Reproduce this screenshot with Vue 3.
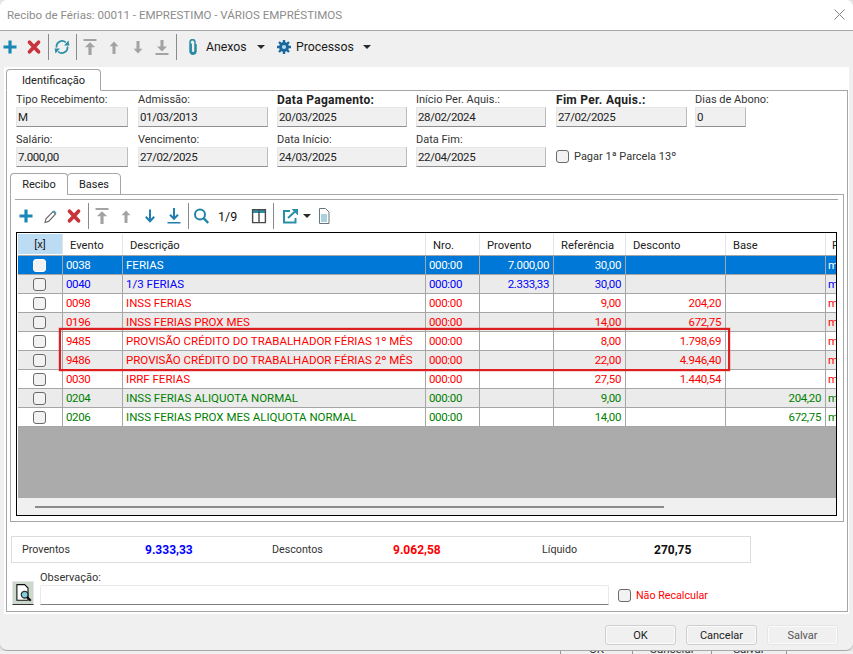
<script setup>
const fieldsA = [
  { label: 'Tipo Recebimento:', value: 'M', w: 112 },
  { label: 'Admissão:', value: '01/03/2013', w: 130 },
  { label: 'Data Pagamento:', value: '20/03/2025', w: 130, bold: true },
  { label: 'Início Per. Aquis.:', value: '28/02/2024', w: 130 },
  { label: 'Fim Per. Aquis.:', value: '27/02/2025', w: 131, bold: true },
  { label: 'Dias de Abono:', value: '0', w: 51 },
]
const fieldsB = [
  { label: 'Salário:', value: '7.000,00', w: 112 },
  { label: 'Vencimento:', value: '27/02/2025', w: 130 },
  { label: 'Data Início:', value: '24/03/2025', w: 130 },
  { label: 'Data Fim:', value: '22/04/2025', w: 130 },
]
const headers = ['[x]', 'Evento', 'Descrição', 'Nro.', 'Provento', 'Referência', 'Desconto', 'Base', 'F']
const rows = [
  { c: 'sel', ev: '0038', d: 'FERIAS', p: '7.000,00', r: '30,00', de: '', b: '' },
  { c: 'blue', ev: '0040', d: '1/3 FERIAS', p: '2.333,33', r: '30,00', de: '', b: '' },
  { c: 'red', ev: '0098', d: 'INSS FERIAS', p: '', r: '9,00', de: '204,20', b: '' },
  { c: 'red', ev: '0196', d: 'INSS FERIAS PROX MES', p: '', r: '14,00', de: '672,75', b: '' },
  { c: 'red', ev: '9485', d: 'PROVISÃO CRÉDITO DO TRABALHADOR FÉRIAS 1º MÊS', p: '', r: '8,00', de: '1.798,69', b: '' },
  { c: 'red', ev: '9486', d: 'PROVISÃO CRÉDITO DO TRABALHADOR FÉRIAS 2º MÊS', p: '', r: '22,00', de: '4.946,40', b: '' },
  { c: 'red', ev: '0030', d: 'IRRF FERIAS', p: '', r: '27,50', de: '1.440,54', b: '' },
  { c: 'green', ev: '0204', d: 'INSS FERIAS ALIQUOTA NORMAL', p: '', r: '9,00', de: '', b: '204,20' },
  { c: 'green', ev: '0206', d: 'INSS FERIAS PROX MES ALIQUOTA NORMAL', p: '', r: '14,00', de: '', b: '672,75' },
]
</script>

<template>
  <div class="page">
    <svg class="sprite" aria-hidden="true">
      <symbol id="i-plus" viewBox="0 0 16 16"><path fill="currentColor" d="M6.4 1.5h3.2v4.9h4.9v3.2H9.6v4.9H6.4V9.6H1.5V6.4h4.9z" /></symbol>
      <symbol id="i-x" viewBox="0 0 16 16"><path fill="none" stroke="currentColor" stroke-width="3.7" stroke-linecap="round" d="M3.5 3.2l9 9.6M12.5 3.2l-9 9.6" /></symbol>
      <symbol id="i-top" viewBox="0 0 16 16"><path fill="currentColor" d="M1.5 0h13v2h-13zM8 3.2l5.2 5H9.6V16H6.4V8.2H2.8z" /></symbol>
      <symbol id="i-up" viewBox="0 0 16 16"><path fill="currentColor" d="M8 2.5l4.4 4.8H9.5V15h-3V7.3H3.6z" /></symbol>
      <symbol id="i-down" viewBox="0 0 16 16"><path fill="currentColor" d="M6.5 2h3v7.7h2.9L8 14.5 3.6 9.7h2.9z" /></symbol>
      <symbol id="i-bottom" viewBox="0 0 16 16"><path fill="currentColor" d="M6.5 1h3v6.6H13L8 12.6 3 7.6h3.5zM1.5 14h13v2h-13z" /></symbol>
      <symbol id="i-down-thin" viewBox="0 0 16 16"><path fill="none" stroke="currentColor" stroke-width="2" d="M8 1.5V13M3.8 8.8L8 13.2l4.2-4.4" /></symbol>
      <symbol id="i-bottom-thin" viewBox="0 0 16 16"><path fill="none" stroke="currentColor" stroke-width="2" d="M8 0v10.5M4 6.8l4 4 4-4" /><path fill="currentColor" d="M1.5 14h13v1.6h-13z" /></symbol>
    </svg>

    <div class="window">
      <header class="titlebar">
        <span class="title">Recibo de Férias: 00011 - EMPRESTIMO - VÁRIOS EMPRÉSTIMOS</span>
        <svg class="close" width="11" height="11" viewBox="0 0 11 11"><path fill="none" stroke="#858585" d="M.5.5l10 10M10.5.5l-10 10" /></svg>
      </header>

      <div class="toolbar top-bar">
        <svg class="tool first plusc"><use href="#i-plus" /></svg>
        <svg class="tool m2 redc"><use href="#i-x" /></svg>
        <span class="sep m2"></span>
        <svg class="tool m1" viewBox="0 0 24 16">
          <path fill="none" stroke="#2a90a8" stroke-width="1.7" d="M6.6 8.5a5.5 5.5 0 0 1 9.2-5M17.4 7.5a5.5 5.5 0 0 1-9.2 5" />
          <path fill="#2a90a8" d="M14 6.4h5.4l-.9-5zM10 9.6H4.6l.9 5z" />
        </svg>
        <span class="sep m2"></span>
        <svg class="tool m1 greyc"><use href="#i-top" /></svg>
        <svg class="tool greyc"><use href="#i-up" /></svg>
        <svg class="tool greyc"><use href="#i-down" /></svg>
        <svg class="tool greyc"><use href="#i-bottom" /></svg>
        <span class="sep m2"></span>
        <svg class="tool m4" viewBox="0 0 24 16">
          <path fill="none" stroke="#2a8ca4" stroke-width="1.5" d="M10.2 4.5v7.4a1.9 1.9 0 0 0 3.8 0V3.2a2.5 2.5 0 0 0-5 0V12a3 3 0 0 0 6 .3V5" />
        </svg>
        <span class="tool-text w-anexos">Anexos</span>
        <span class="caret m10"></span>
        <svg class="gear" width="14" height="14" viewBox="0 0 14 14">
          <circle cx="7" cy="7" r="5" fill="#19699e" />
          <path stroke="#19699e" stroke-width="2.4" d="M7 0v14M0 7h14M2 2l10 10M12 2L2 12" />
          <circle cx="7" cy="7" r="2.1" fill="#b8dcec" />
        </svg>
        <span class="tool-text w-proc">Processos</span>
        <span class="caret m10"></span>
      </div>

      <main class="sheet">
        <div class="tabs outer-tabs"><span class="tab active">Identificação</span></div>
        <section class="panel">
          <div class="form">
            <div v-for="f in fieldsA" :key="f.label" class="field">
              <label :class="{ strong: f.bold }">{{ f.label }}</label>
              <div class="input" :style="{ width: f.w + 'px' }">{{ f.value }}</div>
            </div>
            <div v-for="f in fieldsB" :key="f.label" class="field">
              <label>{{ f.label }}</label>
              <div class="input" :style="{ width: f.w + 'px' }">{{ f.value }}</div>
            </div>
            <div class="pay">
              <span class="check"></span>
              <span class="pay-text">Pagar 1ª Parcela 13º</span>
            </div>
          </div>

          <div class="tabs inner-tabs">
            <span class="tab active small-a">Recibo</span>
            <span class="tab small-b">Bases</span>
          </div>
          <section class="inner-panel">
            <div class="inner-line"></div>
            <div class="toolbar sub-bar">
              <svg class="tool plusc"><use href="#i-plus" /></svg>
              <svg class="tool" viewBox="0 0 24 16">
                <path fill="#fff" stroke="#6a6a6a" stroke-width="1.1" d="M7 14.5l1-3.6 7-7.4 2.6 2.5-7 7.4z" />
                <path fill="#4d9cb8" d="M14.8 3.4l1.2-1.2 2.6 2.5-1.2 1.3z" />
              </svg>
              <svg class="tool redc"><use href="#i-x" /></svg>
              <span class="sep m2"></span>
              <svg class="tool m1 greyc"><use href="#i-top" /></svg>
              <svg class="tool greyc"><use href="#i-up" /></svg>
              <svg class="tool blue-ic"><use href="#i-down-thin" /></svg>
              <svg class="tool blue-ic"><use href="#i-bottom-thin" /></svg>
              <span class="sep m2"></span>
              <svg class="tool" viewBox="0 0 24 16">
                <circle cx="11" cy="6.5" r="5" fill="none" stroke="#1f86a8" stroke-width="2" />
                <path stroke="#1f86a8" stroke-width="2.4" d="M14.6 10.2l4.6 4.8" />
              </svg>
              <span class="pager">1/9</span>
              <svg class="tool m5" viewBox="0 0 24 16">
                <path fill="#2a90a8" d="M5 1h14v4H5z" />
                <path fill="none" stroke="#4a4a4a" stroke-width="1.4" d="M5.6 1.6h12.8v13H5.6zM12 1.6v13" />
              </svg>
              <span class="sep m2"></span>
              <svg class="tool m4" viewBox="0 0 24 16">
                <path fill="none" stroke="#2a90a8" stroke-width="2" d="M12 3H6v11.5h11.5V10" />
                <path fill="none" stroke="#2a90a8" stroke-width="2" d="M10 10l7-6.5" />
                <path fill="#2a90a8" d="M13.5 1H20v6.5z" />
              </svg>
              <span class="caret small m1"></span>
              <svg class="tool m1" viewBox="0 0 24 16">
                <path fill="#fff" stroke="#66767c" d="M7.5.5h6l3.5 3.5v11.5H7.5z" />
                <path fill="#a9d2df" d="M9 6h6v8H9z" />
              </svg>
            </div>

            <div class="grid-box">
              <div class="grid-row head">
                <div v-for="(h, i) in headers" :key="h" class="cell" :class="['c' + i, { marked: i === 0 }]">{{ h }}</div>
              </div>
              <div v-for="r in rows" :key="r.ev" class="grid-row" :class="r.c">
                <div class="cell c0"><span class="check"></span></div>
                <div class="cell c1 dig">{{ r.ev }}</div>
                <div class="cell c2">{{ r.d }}</div>
                <div class="cell c3 dig">000:00</div>
                <div class="cell c4 num dig">{{ r.p }}</div>
                <div class="cell c5 num dig">{{ r.r }}</div>
                <div class="cell c6 num dig">{{ r.de }}</div>
                <div class="cell c7 num dig">{{ r.b }}</div>
                <div class="cell c8">m</div>
              </div>
              <div class="grid-empty"></div>
              <div class="grid-scroll"><span class="thumb"></span></div>
              <div class="highlight"></div>
            </div>
          </section>

          <div class="summary">
            <span>Proventos</span><b class="t-blue">9.333,33</b>
            <span>Descontos</span><b class="t-red">9.062,58</b>
            <span>Líquido</span><b>270,75</b>
          </div>

          <div class="obs">
            <button class="obs-btn" type="button" aria-label="Visualizar">
              <svg width="20" height="20" viewBox="0 0 18 18">
                <path fill="#fff" stroke="#111" d="M3.5 1.5h7l3 3v11h-10z" />
                <circle cx="10.5" cy="10.5" r="3" fill="#7fd0dc" stroke="#333" stroke-width="1.2" />
                <path stroke="#111" stroke-width="2" d="M12.6 12.6l3.4 3.4" />
              </svg>
            </button>
            <div class="obs-field">
              <label>Observação:</label>
              <div class="obs-input"></div>
            </div>
            <span class="check obs-check"></span>
            <span class="t-red-plain">Não Recalcular</span>
          </div>
        </section>
      </main>

      <footer class="actions">
        <button class="btn" type="button">OK</button>
        <button class="btn" type="button">Cancelar</button>
        <button class="btn off" type="button">Salvar</button>
      </footer>
    </div>

    <div class="behind">
      <span class="b1">OK</span>
      <span class="b2">Cancelar</span>
      <span class="b3">Salvar</span>
    </div>
  </div>
</template>

<style scoped>
.page {
  width: 853px;
  height: 654px;
  overflow: hidden;
  background: #e4e4e4;
  font-family: "Roboto", "Liberation Sans", sans-serif;
  font-size: 11.5px;
  color: #222;
  position: relative;
}
.sprite { position: absolute; width: 0; height: 0; }
.window {
  height: 651px;
  box-sizing: border-box;
  background: #f0f0f0;
  border-radius: 7px;
  border-bottom: 1px solid #a8a8a8;
  overflow: hidden;
  display: flex;
  flex-direction: column;
}
.titlebar {
  flex: 0 0 31px;
  box-sizing: border-box;
  height: 31px;
  background: #fff;
  border-bottom: 1px solid #a6a6a6;
  display: flex;
  align-items: center;
  justify-content: space-between;
  padding: 0 8px 1px 7px;
}
.title { color: #8c8c8c; font-size: 11.55px; }
.close { margin-top: -1px; }
.toolbar { display: flex; align-items: center; }
.top-bar { flex: 0 0 36px; box-sizing: border-box; height: 36px; padding-bottom: 4px; font-size: 12.3px; color: #1a1a1a; }
.tool { width: 24px; height: 16px; flex: none; }
.tool.first { width: 20px; }
.plusc { color: #1b87b5; }
.redc { color: #c9343c; }
.greyc { color: #a3a3a3; }
.blue-ic { color: #1f7fb0; }
.m1 { margin-left: 1px; }
.m2 { margin-left: 2px; }
.m4 { margin-left: 4px; }
.m5 { margin-left: 5px; }
.m10 { margin-left: 10px; }
.sep { width: 1px; height: 26px; background: #8a8a8a; flex: none; }
.tool-text { flex: none; margin-left: 1px; }
.w-anexos { width: 41px; }
.gear { margin-left: 12px; flex: none; }
.w-proc { width: 57px; margin-left: 5px; }
.caret {
  width: 0;
  height: 0;
  flex: none;
  border-left: 4px solid transparent;
  border-right: 4px solid transparent;
  border-top: 4px solid #2a2a2a;
}
.caret.small { border-left-width: 4px; border-right-width: 4px; border-top-width: 4px; }

.sheet {
  flex: 0 0 547px;
  box-sizing: border-box;
  height: 547px;
  margin: 0 4px;
  padding: 0 1px 2px 2px;
  background: #fff;
  display: flex;
  flex-direction: column;
}
.tabs { display: flex; align-items: flex-end; flex: none; }
.outer-tabs { height: 24px; margin-bottom: -1px; position: relative; z-index: 1; }
.tab {
  box-sizing: border-box;
  height: 22px;
  line-height: 21px;
  font-size: 11px;
  text-align: center;
  border: 1px solid #a6a6a6;
  border-radius: 4px 4px 0 0;
  background: #fff;
  color: #222;
}
.tab.active { border-bottom-color: #fff; }
.outer-tabs .tab { width: 95px; }
.panel {
  flex: 1;
  border: 1px solid #a6a6a6;
  padding: 0 3px;
  display: flex;
  flex-direction: column;
  min-height: 0;
}
.form {
  flex: none;
  display: grid;
  grid-template-columns: 122px 139px 139px 140px 139px 60px;
  grid-auto-rows: 36px;
  row-gap: 4px;
  padding-left: 6px;
  height: 76px;
}
.field { display: flex; flex-direction: column; }
.field label { height: 16px; line-height: 18px; font-size: 11px; color: #333; white-space: nowrap; }
.field label.strong { font-size: 12px; font-weight: 700; letter-spacing: .3px; color: #222; }
.input {
  box-sizing: border-box;
  height: 20px;
  line-height: 18px;
  padding-left: 1px;
  background: #f0f0f0;
  border: 1px solid #e6e6e6;
  border-right-color: #bcbcbc;
  border-bottom: 1px solid #8f8f8f;
  letter-spacing: -.4px;
}
.pay { display: flex; align-items: center; gap: 5px; padding-top: 14px; height: 22px; }
.pay-text { font-size: 11px; color: #333; }
.check {
  display: block;
  box-sizing: border-box;
  width: 13px;
  height: 13px;
  flex: none;
  background: #f2f2f2;
  border: 1px solid #6a6a6a;
  border-radius: 3px;
}
.inner-tabs { height: 22px; margin-top: 6px; margin-bottom: -1px; position: relative; z-index: 1; }
.small-a { width: 58px; }
.small-b { width: 54px; margin-left: -1px; }
.inner-panel {
  flex: none;
  height: 328px;
  box-sizing: border-box;
  border: 1px solid #a6a6a6;
  padding: 4px 4px 0;
}
.inner-line { height: 1px; background: #a6a6a6; margin-right: 1px; }
.sub-bar { height: 32px; font-size: 12.5px; }
.sub-bar .tool:first-child { margin-left: -1px; }
.pager { width: 24px; margin-left: 5px; flex: none; color: #111; }

.grid-box {
  position: relative;
  box-sizing: border-box;
  height: 284px;
  margin: 0 2px 0 1px;
  border: 1px solid #000;
  background: #fff;
  padding: 1px 0 0 1px;
  display: flex;
  flex-direction: column;
  overflow: hidden;
}
.grid-row {
  flex: none;
  display: grid;
  grid-template-columns: 45px 60px 303px 54px 74px 72px 100px 100px 12px;
  height: 19px;
  box-sizing: border-box;
  border-bottom: 1px solid #a6a6a6;
  line-height: 18px;
  white-space: nowrap;
}
.cell { box-sizing: border-box; border-right: 1px solid #a6a6a6; padding: 0 4px 0 3px; overflow: hidden; }
.cell.c8 { border-right: 0; padding: 0 0 0 2px; }
.dig { letter-spacing: -.35px; }
.num { text-align: right; }
.c0 { display: flex; align-items: center; justify-content: center; padding: 0 2px 0 0; }
.head { height: 22px; line-height: 23px; font-size: 11.2px; }
.head .cell { border-right: 1px solid #e4e4e4; padding-left: 7px; }
.head .c0 { padding: 0; background: #bcdcf4; margin: 0 0 1px; }
.head .c8 { border-right: 0; padding-left: 6px; }
.grid-row:nth-child(even):not(.head) { background: #fff; }
.grid-row:nth-child(odd):not(.head) { background: #ebebeb; }
.grid-row.sel { background: #0078d7 !important; color: #fff; }
.sel .check { border-color: #fff; }
.blue { color: #0000ff; }
.red { color: #ff0000; }
.green { color: #008000; }
.grid-empty { flex: 1; background: #ababab; }
.grid-scroll { flex: none; height: 17px; background: #f0f0f0; padding: 8px 0 0 17px; box-sizing: border-box; }
.thumb { display: block; width: 629px; height: 2px; background: #8a8a8a; }
.highlight {
  position: absolute;
  left: 42px;
  top: 95px;
  width: 671px;
  height: 43px;
  box-sizing: border-box;
  border: 2px solid #dd1f1f;
  box-shadow: 0 0 0 .5px rgba(224, 32, 32, .4);
  pointer-events: none;
}

.summary {
  flex: none;
  box-sizing: border-box;
  width: 740px;
  height: 27px;
  margin-top: 14px;
  margin-left: 1px;
  padding-left: 10px;
  border: 1px solid #dcdcdc;
  display: grid;
  grid-template-columns: 123px 127px 121px 149px 112px 1fr;
  align-items: center;
  color: #333;
  font-size: 10.7px;
}
.summary b { color: #111; font-weight: 700; font-size: 12px; }
.summary b.t-blue { color: #0000ff; }
.summary b.t-red { color: #ff0000; }

.obs { flex: none; display: flex; align-items: flex-end; margin-top: 8px; margin-left: 2px; height: 34px; }
.obs-btn {
  box-sizing: border-box;
  width: 22px;
  height: 24px;
  padding: 0;
  margin: 0;
  display: flex;
  align-items: center;
  justify-content: center;
  background: #cdd8cd;
  border: 1px solid #e8e8e8;
  border-bottom: 1px solid #333;
  border-radius: 0;
}
.obs-field { margin-left: 6px; width: 569px; }
.obs-field label { display: block; height: 14px; line-height: 13px; font-size: 11px; color: #333; }
.obs-input {
  box-sizing: border-box;
  height: 20px;
  background: #fff;
  border: 1px solid #eaeaea;
  border-bottom: 1px solid #808080;
  border-radius: 2px 2px 0 0;
}
.obs-check { margin-left: 9px; margin-bottom: 3px; }
.t-red-plain { color: #ff0000; font-size: 10.7px; margin-left: 5px; margin-bottom: 2px; line-height: 14px; }

.actions { flex: 1; display: flex; justify-content: flex-end; align-items: flex-start; gap: 10px; padding: 11px 15px 0 0; }
.btn {
  box-sizing: border-box;
  width: 71px;
  height: 20px;
  padding: 1px 0 0;
  font: inherit;
  font-size: 11px;
  color: #222;
  background: #f0f0f0;
  border: 1px solid #cfcfcf;
  border-radius: 3px;
  box-shadow: inset 0 0 0 1px #fbfbfb;
}
.btn.off { color: #555; border-color: #e6e6e6; }

.behind {
  height: 3px;
  overflow: hidden;
  background: #efefef;
  display: flex;
  align-items: flex-start;
  font-size: 11.5px;
  color: #333;
  line-height: 9px;
}
.behind span { flex: none; margin-top: -6px; border-right: 1px solid #999; height: 12px; box-sizing: border-box; text-align: center; }
.b1 { margin-left: 560px; width: 73px; border-left: 1px solid #999; }
.b2 { width: 79px; }
.b3 { width: 75px; }
</style>
